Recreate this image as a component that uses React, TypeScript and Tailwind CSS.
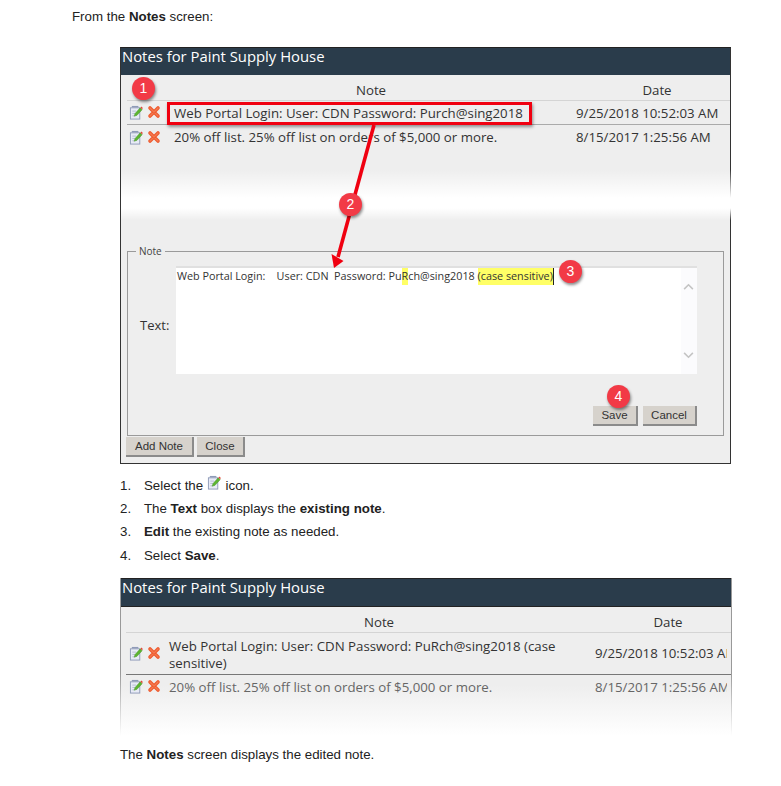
const ui = { fontFamily: '"Open Sans", "Noto Sans", sans-serif' };

function EditIcon({ className = "" }: { className?: string }) {
  return (
    <svg viewBox="0 0 16 16" width="15" height="15" className={className}>
      <rect x="1.5" y="3" width="10" height="12" fill="#e8ebf6" stroke="#8f9bb8" strokeWidth="1" />
      <path d="M3 1.8h7" stroke="#8f9bb8" strokeWidth="1.6" />
      <path d="M3.5 6.5h4M3.5 9h3M3.5 11.5h2" stroke="#a9b2ca" strokeWidth="0.8" />
      <path d="M5.5 12l1-3L12 3l2 2-5.5 6z" fill="#5cb531" stroke="#3f8f1e" strokeWidth="0.5" />
      <path d="M12.2 2.8l1-1.2 1.6 1.6-1 1.3z" fill="#e2483a" />
    </svg>
  );
}

function DeleteIcon() {
  return (
    <svg viewBox="0 0 14 14" width="14" height="14">
      <path d="M3 3l8 8M11 3l-8 8" stroke="#ee5a2f" strokeWidth="3.6" strokeLinecap="round" />
      <path d="M3 3l8 8M11 3l-8 8" stroke="#f47a50" strokeWidth="1.2" strokeLinecap="round" />
    </svg>
  );
}

function Btn({ label, w }: { label: string; w: string }) {
  return (
    <div
      className={`${w} h-[20px] bg-[#d6d2cc] border-r-2 border-b-2 border-[#8b8b8b] text-[11.5px] leading-[19px] text-center text-[#333]`}
      style={{ fontFamily: '"Liberation Sans", sans-serif' }}
    >
      {label}
    </div>
  );
}

function Step({ n, children }: { n: number; children: React.ReactNode }) {
  return (
    <div className="flex h-[23.3px] items-center">
      <span className="w-[24px]">{n}.</span>
      <span className="flex items-center whitespace-pre">{children}</span>
    </div>
  );
}

function Badge({ n, x, y }: { n: number; x: string; y: string }) {
  return (
    <div
      className={`absolute ${x} ${y} w-[23px] h-[23px] rounded-full bg-[#f23a46] text-white text-[14px] leading-[23px] text-center shadow-[1px_2px_3px_rgba(0,0,0,0.45)]`}
      style={{ fontFamily: '"Liberation Sans", sans-serif' }}
    >
      {n}
    </div>
  );
}

function Title() {
  return (
    <div className="h-[27px] bg-[#2a3c4b] pl-[1px] text-[14.85px] leading-[17px] text-white" style={ui}>
      Notes for Paint Supply House
    </div>
  );
}

export default function App() {
  return (
    <div
      className="relative w-[781px] h-[786px] overflow-hidden bg-white pt-[10px] text-[13.3px] text-[#222]"
      style={{ fontFamily: '"Liberation Sans", Arial, sans-serif' }}
    >
      <p className="ml-[72px] h-[14px] leading-[14px]">
        From the <b>Notes</b> screen:
      </p>

      {/* first screenshot */}
      <div className="ml-[120px] mt-[23px] w-[611px] h-[417px] border border-[#333] bg-[#eeeeee] border-t-[#222]">
        <Title />
        <div className="h-[4px]" />
        <div className="text-[13.25px] text-[#333]" style={ui}>
          <div className="grid grid-cols-[46px_403px_149px] h-[22px] ml-[6px] border-b border-[#d4d4d4] leading-[22px] text-center">
            <span />
            <span className="pr-[7px]">Note</span>
            <span className="pl-[13px]">Date</span>
          </div>
          <div className="grid grid-cols-[46px_403px_149px] h-[24px] ml-[6px] border-b border-[#aaa] items-center">
            <span className="flex gap-[3px] pl-[2px]"><EditIcon /><DeleteIcon /></span>
            <span className="pl-[1px] pt-[2px] whitespace-nowrap">Web Portal Login: User: CDN Password: Purch@sing2018</span>
            <span className="pt-[2px] whitespace-nowrap">9/25/2018 10:52:03 AM</span>
          </div>
          <div className="grid grid-cols-[46px_403px_149px] h-[24px] ml-[6px] items-center">
            <span className="flex gap-[3px] pl-[2px]"><EditIcon /><DeleteIcon /></span>
            <span className="pl-[1px] pt-[2px] whitespace-nowrap">20% off list. 25% off list on orders of $5,000 or more.</span>
            <span className="pt-[2px] whitespace-nowrap">8/15/2017 1:25:56 AM</span>
          </div>
        </div>
        <div className="h-[102px] mr-[-1px] bg-[linear-gradient(to_bottom,transparent_0%,transparent_20%,#ffffff_48%,#ffffff_58%,transparent_70%)]" />

        {/* note fieldset */}
        <div className="relative mx-[6px] h-[185px] border border-[#9a9a9a] flex pt-[14px] pr-[26px]">
          <span className="absolute left-[8px] top-[-7px] bg-[#eeeeee] px-[3px] text-[10px] leading-[12px] text-[#444]" style={ui}>
            Note
          </span>
          <span className="w-[48px] pl-[12px] mt-[47px] text-[13px] leading-[24px] text-[#333]" style={ui}>Text:</span>
          <div className="flex-1 flex flex-col">
            <div className="h-[108px] bg-white border-t-2 border-[#e0e0e0] pl-[1px] flex justify-between text-[10.8px] leading-[15px] text-[#333]" style={ui}>
              <div className="whitespace-pre">
                {"Web Portal Login:    User: CDN  Password: Pu"}
                <span className="bg-[#ffff66] pb-[2px]">R</span>
                {"ch@sing2018 "}
                <span className="bg-[#ffff66] border-r border-[#222] pb-[2px]">(case sensitive)</span>
              </div>
              <div className="w-[16px] pr-[2px] flex flex-col items-center bg-[#fbfbfd] text-[#c4c4c4]">
                <svg viewBox="0 0 12 8" width="11" height="7" className="mt-[15px]"><path d="M1 7l5-5 5 5" fill="none" stroke="currentColor" strokeWidth="1.8" /></svg>
                <svg viewBox="0 0 12 8" width="11" height="7" className="mt-[62px]"><path d="M1 1l5 5 5-5" fill="none" stroke="currentColor" strokeWidth="1.8" /></svg>
              </div>
            </div>
            <div className="flex justify-end gap-[5px] mt-[32px]">
              <Btn label="Save" w="w-[45px]" />
              <Btn label="Cancel" w="w-[54px]" />
            </div>
          </div>
        </div>
        <div className="flex gap-[3px] ml-[5px] mt-[1px]">
          <Btn label="Add Note" w="w-[68px]" />
          <Btn label="Close" w="w-[48px]" />
        </div>
      </div>

      {/* steps */}
      <div className="ml-[120px] mt-[10px]">
        <Step n={1}>Select the <EditIcon className="mb-[6px]" /> icon.</Step>
        <Step n={2}><span>The <b>Text</b> box displays the <b>existing note</b>.</span></Step>
        <Step n={3}><span><b>Edit</b> the existing note as needed.</span></Step>
        <Step n={4}><span>Select <b>Save</b>.</span></Step>
      </div>

      {/* second screenshot */}
      <div className="ml-[120px] mt-[11px] w-[612px] h-[158px] px-[1px] bg-[linear-gradient(to_bottom,#999999_0%,#999999_60%,#ffffff_100%)]">
        <div className="h-full bg-[linear-gradient(to_bottom,#eeeeee_0%,#eeeeee_68%,#ffffff_100%)]">
          <div className="border-t border-[#222]">
            <Title />
          </div>
          <div className="h-[1px] bg-[#222]" />
          <div className="text-[13.25px] text-[#333]" style={ui}>
            <div className="grid grid-cols-[28px_435px_138px] h-[26px] ml-[5px] border-b border-[#d4d4d4] leading-[30px] text-center">
              <span />
              <span className="pl-[15px]">Note</span>
              <span className="pl-[20px]">Date</span>
            </div>
            <div className="grid grid-cols-[43px_426px_132px] h-[42px] ml-[5px] border-b border-[#777] items-center leading-[17px]">
              <span className="flex gap-[3px] pl-[3px]"><EditIcon /><DeleteIcon /></span>
              <span className="pt-[2px]">
                Web Portal Login: User: CDN Password: PuRch@sing2018 (case<br />sensitive)
              </span>
              <span className="whitespace-nowrap overflow-hidden">9/25/2018 10:52:03 AM</span>
            </div>
            <div className="grid grid-cols-[43px_426px_132px] h-[26px] ml-[5px] items-center text-[#666]">
              <span className="flex gap-[3px] pl-[3px] mt-[-3px]"><EditIcon /><DeleteIcon /></span>
              <span className="whitespace-nowrap">20% off list. 25% off list on orders of $5,000 or more.</span>
              <span className="whitespace-nowrap overflow-hidden">8/15/2017 1:25:56 AM</span>
            </div>
          </div>
        </div>
      </div>

      <p className="ml-[120px] mt-[12px] leading-[14px]">
        The <b>Notes</b> screen displays the edited note.
      </p>

      {/* callouts on top of the screenshot */}
      <div className="absolute left-[167px] top-[102px] w-[365px] h-[23px] border-[3px] border-[#f00010] shadow-[1px_2px_3px_rgba(0,0,0,0.4)]" />
      <svg className="absolute left-[320px] top-[120px] pointer-events-none" width="70" height="155" viewBox="320 120 70 155">
        <path d="M374 125L338 257" stroke="#f00010" strokeWidth="3.6" />
        <path d="M334 268L331.5 254L343.5 261z" fill="#f00010" />
      </svg>
      <Badge n={1} x="left-[132px]" y="top-[77px]" />
      <Badge n={2} x="left-[339px]" y="top-[193px]" />
      <Badge n={3} x="left-[559px]" y="top-[260px]" />
      <Badge n={4} x="left-[607px]" y="top-[385px]" />
    </div>
  );
}
